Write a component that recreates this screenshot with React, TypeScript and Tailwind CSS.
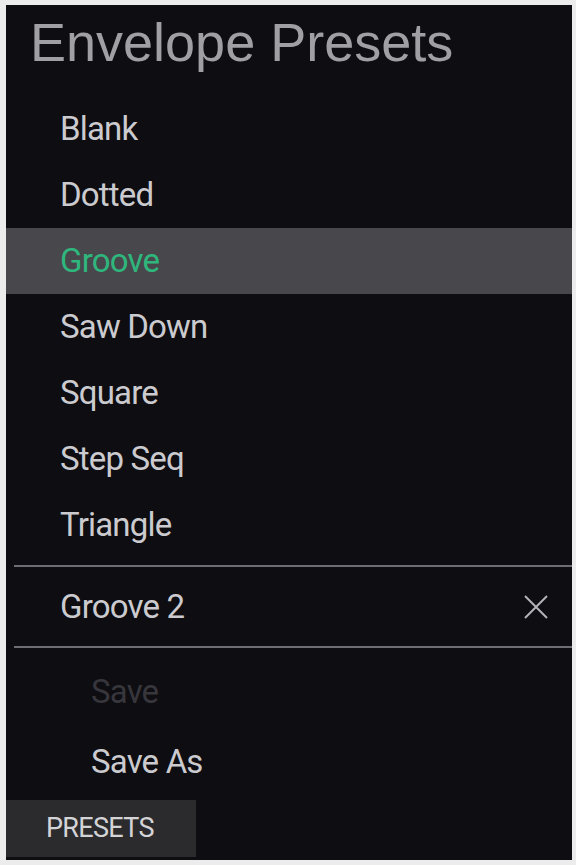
import React from "react";

const presets = ["Blank", "Dotted", "Groove", "Saw Down", "Square", "Step Seq", "Triangle"];

export const EnvelopePresets = () => {
    const selected = "Groove";

    return (
        <div className="w-[576px] h-[865px] bg-[#ececec] pt-[5px] pl-[6px] pr-[4px] pb-[5px]">
            <div className="h-full bg-[#0e0d12] flex flex-col font-['Roboto',sans-serif]">
                {/* Title */}
                <div className="h-[91px] pt-[10px] pl-[24px]">
                    <h1 className="font-['Liberation_Sans',Arial,sans-serif] text-[54px] leading-none text-[#a09fa4]">
                        Envelope Presets
                    </h1>
                </div>

                {/* Preset list */}
                <div className="flex flex-col">
                    {presets.map(name => (
                        <div
                            key={name}
                            className={
                                name === selected
                                    ? "h-[66px] flex items-center pl-[54px] bg-[#48474c] text-[#2fb67d] text-[33px] tracking-[-0.025em]"
                                    : "h-[66px] flex items-center pl-[54px] text-[#cbcbcf] text-[33px] tracking-[-0.025em]"
                            }
                        >
                            {name}
                        </div>
                    ))}
                </div>

                <div className="mt-[7px] ml-[8px] h-[2px] bg-[#6e6d73]"/>

                {/* User preset */}
                <div className="h-[79px] flex items-center justify-between pl-[54px] pr-[24px]">
                    <span className="text-[#cbcbcf] text-[33px] tracking-[-0.025em]">Groove 2</span>
                    <svg width="24" height="24" viewBox="0 0 24 24" className="text-[#b4b3b8]">
                        <path d="M1 1 L23 23 M23 1 L1 23" stroke="currentColor" strokeWidth="2" fill="none"/>
                    </svg>
                </div>

                <div className="ml-[8px] h-[2px] bg-[#6e6d73]"/>

                {/* Actions */}
                <div className="flex flex-col pt-[9px]">
                    <div className="h-[70px] flex items-center pl-[85px] text-[#37363c] text-[33px] tracking-[-0.025em]">
                        Save
                    </div>
                    <div className="h-[70px] flex items-center pl-[85px] text-[#cbcbcf] text-[33px] tracking-[-0.025em]">
                        Save As
                    </div>
                </div>

                <div className="mt-auto mb-[3px] w-[190px] h-[57px] bg-[#2b2b2e] flex items-center pl-[40px]">
                    <span className="text-[#d4d4d6] text-[27px] tracking-[-0.025em]">PRESETS</span>
                </div>
            </div>
        </div>
    )
}

export default EnvelopePresets;
